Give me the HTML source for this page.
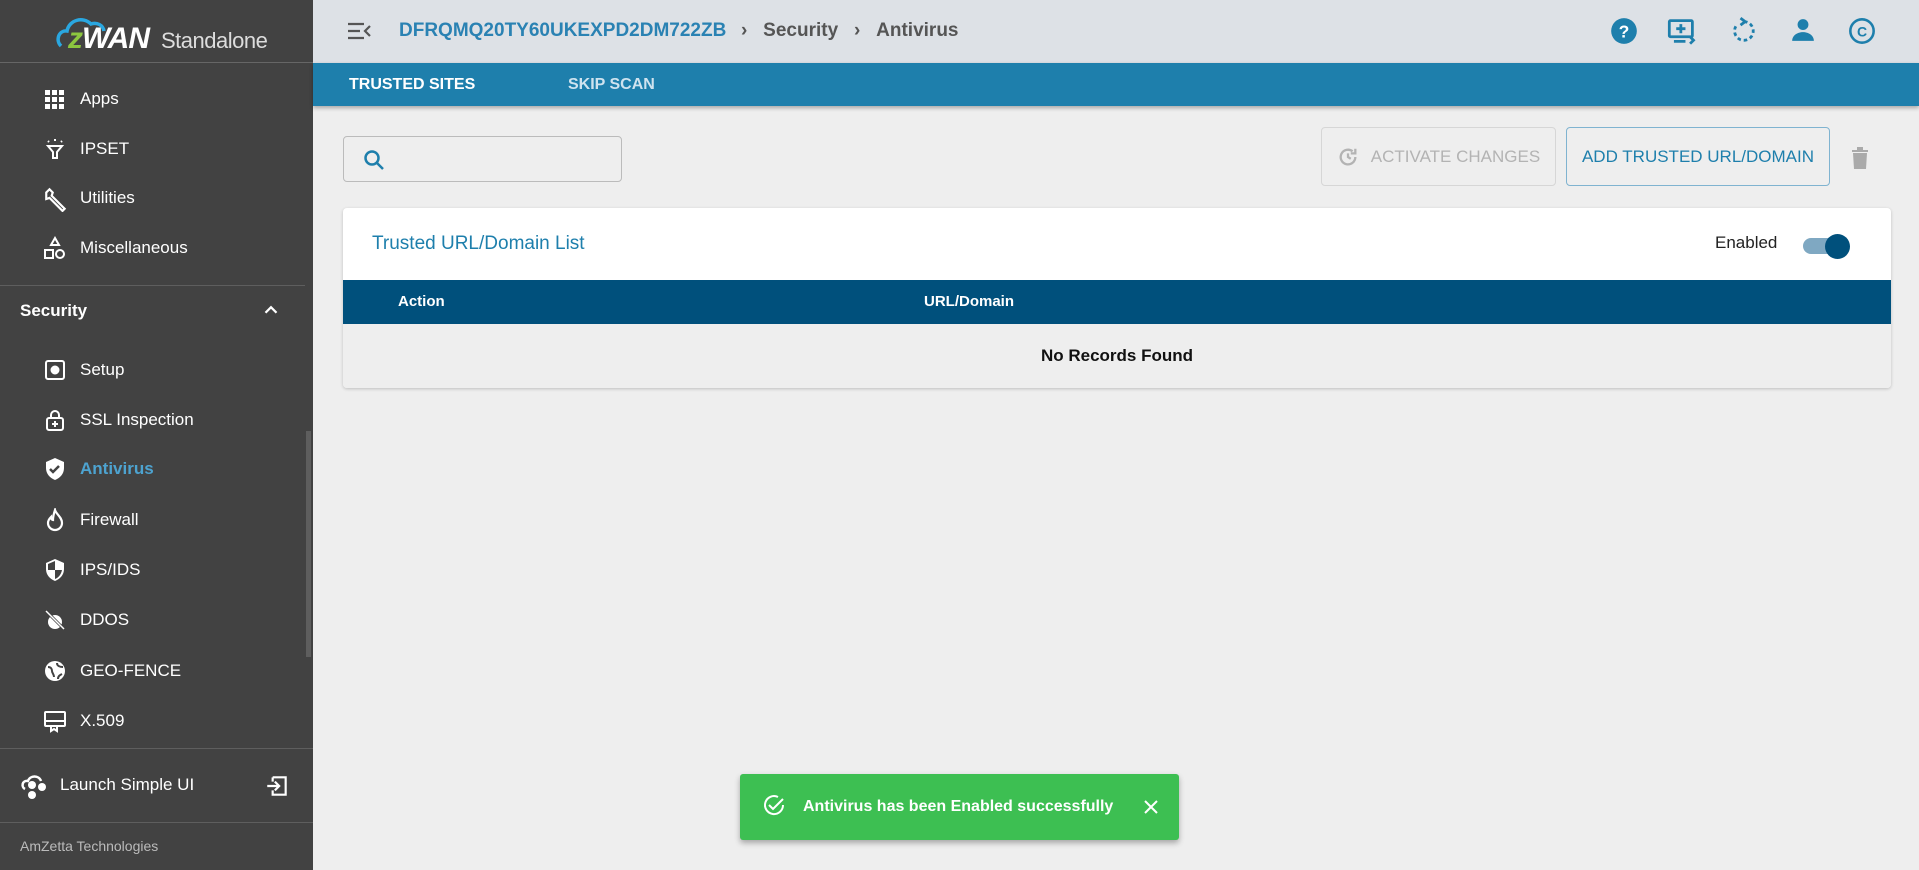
<!DOCTYPE html>
<html><head><meta charset="utf-8"><style>
*{box-sizing:border-box;margin:0;padding:0}
body{width:1919px;height:870px;overflow:hidden;font-family:"Liberation Sans",sans-serif;background:#eeeeee;position:relative}
.sb{position:absolute;left:0;top:0;width:313px;height:870px;background:#424242;color:#fff}
.logo{height:63px;border-bottom:1px solid #666;position:relative}
.nav{position:absolute;left:0;width:313px;height:40px;display:flex;align-items:center;font-size:17px;color:#fff}
.nav svg{position:absolute;left:43px;top:8px}
.nav span{position:absolute;left:80px}
.hr{position:absolute;left:0;width:305px;height:1px;background:#5e5e5e}
.top{position:absolute;left:313px;top:0;right:0;height:63px;background:#dde1e6}
.tabs{position:absolute;left:313px;top:63px;right:0;height:43px;background:#1e7fac;box-shadow:0 2px 4px rgba(0,0,0,.3);color:#fff;font-size:16px;font-weight:bold}
.btn{position:absolute;border-radius:4px;font-size:17px;display:flex;align-items:center;justify-content:center}
.card{position:absolute;left:343px;top:208px;width:1548px;height:180px;background:#fff;border-radius:4px;box-shadow:0 1px 3px rgba(0,0,0,.2);overflow:hidden}
</style></head><body>
<div class="sb">
 <div class="logo">
  <svg style="position:absolute;left:55px;top:12px" width="60" height="40" viewBox="0 0 60 40"><path d="M6 34 C0 28 4 18 12 19 C14 8 28 4 36 12 C42 10 48 13 49 19" fill="none" stroke="#2aa7e0" stroke-width="3.5"/></svg>
  <div style="position:absolute;left:68px;top:22px;font-size:30px;font-weight:bold;font-style:italic;letter-spacing:-1px"><span style="color:#8cc63f">z</span>WAN</div>
  <div style="position:absolute;left:161px;top:28px;font-size:22px;color:#ddd;letter-spacing:-0.5px">Standalone</div>
 </div>
 <div class="nav" style="top:79px"><svg width="24" height="24" viewBox="0 0 24 24" fill="#fff"><path d="M2 3h5v5H2zm7 0h5v5H9zm7 0h5v5h-5zM2 10h5v5H2zm7 0h5v5H9zm7 0h5v5h-5zM2 17h5v5H2zm7 0h5v5H9zm7 0h5v5h-5z"/></svg><span>Apps</span></div>
 <div class="nav" style="top:129px"><svg width="24" height="24" viewBox="0 0 24 24" fill="none" stroke="#fff" stroke-width="2"><path d="M5 9h14l-5 6v6h-4v-6z"/><path d="M12 2v2M5 4l1 1M19 4l-1 1"/></svg><span>IPSET</span></div>
 <div class="nav" style="top:178px"><svg width="26" height="26" viewBox="0 0 24 24" fill="none" stroke="#fff" stroke-width="2"><path d="M3 6l3-3 3 3-1 3 12 12-2 2L6 11 3 12z"/></svg><span>Utilities</span></div>
 <div class="nav" style="top:228px"><svg width="24" height="24" viewBox="0 0 24 24" fill="none" stroke="#fff" stroke-width="2"><path d="M12 2l4 7H8z"/><rect x="2" y="14" width="8" height="8"/><circle cx="17" cy="18" r="4"/></svg><span>Miscellaneous</span></div>
 <div class="hr" style="top:285px"></div>
 <div class="nav" style="top:291px;font-weight:bold"><span style="left:20px">Security</span><svg style="left:260px" width="22" height="22" viewBox="0 0 24 24" fill="none" stroke="#fff" stroke-width="2.5"><path d="M6 15l6-6 6 6"/></svg></div>
 <div class="nav" style="top:350px"><svg width="24" height="24" viewBox="0 0 24 24" fill="none" stroke="#fff" stroke-width="2"><rect x="3" y="3" width="18" height="18" rx="2"/><circle cx="12" cy="12" r="3.5" fill="#fff"/></svg><span>Setup</span></div>
 <div class="nav" style="top:400px"><svg width="24" height="24" viewBox="0 0 24 24" fill="none" stroke="#fff" stroke-width="2"><rect x="4" y="10" width="16" height="12" rx="2"/><path d="M8 10V7a4 4 0 018 0v3M12 13v6M9 16h6"/></svg><span>SSL Inspection</span></div>
 <div class="nav" style="top:449px"><svg width="24" height="24" viewBox="0 0 24 24"><path d="M12 1L3 5v6c0 6 4 10 9 12 5-2 9-6 9-12V5z" fill="#fff"/><path d="M7 12l3 3 6-6" stroke="#424242" stroke-width="2.5" fill="none"/></svg><span style="color:#4da3d0;font-weight:bold">Antivirus</span></div>
 <div class="nav" style="top:500px"><svg width="24" height="24" viewBox="0 0 24 24" fill="none" stroke="#fff" stroke-width="2.2"><path d="M12 2c1 4 7 7 7 13a7 7 0 01-14 0c0-3 2-5 3-6 0 2 1 3 2 3 0-4 1-7 2-10z"/></svg><span>Firewall</span></div>
 <div class="nav" style="top:550px"><svg width="24" height="24" viewBox="0 0 24 24"><path d="M12 1L3 5v6c0 6 4 10 9 12 5-2 9-6 9-12V5z" fill="#fff"/><path d="M12 3v9H5V6zM12 12h7c-1 5-4 8-7 9z" fill="#424242"/></svg><span>IPS/IDS</span></div>
 <div class="nav" style="top:600px"><svg width="24" height="24" viewBox="0 0 24 24" fill="#fff"><ellipse cx="12" cy="14" rx="7" ry="7"/><path d="M3 3l18 18" stroke="#424242" stroke-width="3"/><path d="M3 3l18 18" stroke="#fff" stroke-width="1.5"/></svg><span>DDOS</span></div>
 <div class="nav" style="top:651px"><svg width="24" height="24" viewBox="0 0 24 24"><circle cx="12" cy="12" r="10" fill="#fff"/><path d="M5 8c3 0 4 2 4 4s2 3 2 6M14 4c0 3 3 4 6 4M15 20c0-3 2-4 4-5" stroke="#424242" stroke-width="2" fill="none"/></svg><span>GEO-FENCE</span></div>
 <div class="nav" style="top:701px"><svg width="24" height="24" viewBox="0 0 24 24" fill="none" stroke="#fff" stroke-width="2"><rect x="2" y="3" width="20" height="14" rx="1"/><path d="M2 12h20M8 17v5l3-2 3 2v-5" /></svg><span>X.509</span></div>
 <div class="hr" style="top:748px;width:313px"></div>
 <div class="nav" style="top:765px"><svg style="left:20px" width="30" height="26" viewBox="0 0 30 26" fill="#fff"><path d="M5 16C1 14 2 7 8 8c2-6 11-6 13 0" fill="none" stroke="#fff" stroke-width="2.5"/><circle cx="12" cy="12" r="4"/><circle cx="22" cy="14" r="4"/><circle cx="12" cy="22" r="4"/></svg><span style="left:60px">Launch Simple UI</span><svg style="left:264px" width="26" height="26" viewBox="0 0 24 24" fill="none" stroke="#fff" stroke-width="2"><path d="M8 4H20V20H8V16M8 8V4M3 12h11M10 8l4 4-4 4"/></svg></div>
 <div class="hr" style="top:822px;width:313px"></div>
 <div style="position:absolute;left:20px;top:838px;font-size:14px;color:#bbb">AmZetta Technologies</div>
 <div style="position:absolute;left:306px;top:431px;width:5px;height:226px;background:#5e5e5e"></div>
</div>
<div class="top">
 <svg style="position:absolute;left:33px;top:20px" width="26" height="22" viewBox="0 0 26 22" fill="none" stroke="#555" stroke-width="2.2"><path d="M2 4h16M2 11h12M2 18h16M24 6l-5 5 5 5"/></svg>
 <div style="position:absolute;left:86px;top:20px;font-size:19px;font-weight:bold;color:#2a82b3">DFRQMQ20TY60UKEXPD2DM722ZB</div>
 <div style="position:absolute;left:428px;top:20px;font-size:19px;font-weight:bold;color:#555">›&nbsp;&nbsp;&nbsp;Security&nbsp;&nbsp;&nbsp;›&nbsp;&nbsp;&nbsp;Antivirus</div>
 <svg style="position:absolute;left:1297px;top:17px" width="28" height="28" viewBox="0 0 24 24"><circle cx="12" cy="12" r="11" fill="#1e7fac"/><text x="12" y="17.5" text-anchor="middle" font-size="15" font-weight="bold" fill="#fff" font-family="Liberation Sans">?</text></svg>
 <svg style="position:absolute;left:1354px;top:17px" width="30" height="28" viewBox="0 0 26 24" fill="none" stroke="#1e7fac" stroke-width="2.4"><rect x="2" y="3" width="20" height="14" rx="1"/><path d="M12 6v8M8 10h8M6 21h10M20 17l3 3-3 3"/></svg>
 <svg style="position:absolute;left:1417px;top:17px" width="28" height="28" viewBox="0 0 24 24" fill="none" stroke="#1e7fac" stroke-width="2.4"><path d="M12 4a8 8 0 11-7 4" stroke-dasharray="3 2.5"/><path d="M9 1l4 3-4 3" /></svg>
 <svg style="position:absolute;left:1477px;top:17px" width="26" height="26" viewBox="0 0 24 24" fill="#1e7fac"><circle cx="12" cy="7" r="5"/><path d="M2 22c0-5 5-8 10-8s10 3 10 8z"/></svg>
 <svg style="position:absolute;left:1535px;top:17px" width="28" height="28" viewBox="0 0 24 24"><circle cx="12" cy="12" r="10" fill="none" stroke="#1e7fac" stroke-width="2.2"/><text x="12" y="16.5" text-anchor="middle" font-size="12" font-weight="bold" fill="#1e7fac" font-family="Liberation Sans">C</text></svg>
</div>
<div class="tabs"><span style="position:absolute;left:36px;top:13px">TRUSTED SITES</span><span style="position:absolute;left:255px;top:13px;color:#cfe3ef">SKIP SCAN</span></div>
<div style="position:absolute;left:343px;top:136px;width:279px;height:46px;border:1px solid #bbb;border-radius:4px;background:#eee"><svg style="position:absolute;left:18px;top:11px" width="24" height="24" viewBox="0 0 24 24" fill="none" stroke="#1e7fac" stroke-width="2.5"><circle cx="10" cy="10" r="6.5"/><path d="M15 15l6 6"/></svg></div>
<div class="btn" style="left:1321px;top:127px;width:235px;height:59px;border:1px solid #d6d6d6;color:#b3b3b3"><svg width="22" height="22" viewBox="0 0 24 24" fill="none" stroke="#b3b3b3" stroke-width="2.5" style="margin-right:12px"><path d="M20 12a8 8 0 11-3-6.2M20 3v5h-5M12 8v4l3 2"/></svg>ACTIVATE CHANGES</div>
<div class="btn" style="left:1566px;top:127px;width:264px;height:59px;border:1px solid #7fb3d0;color:#1e7fac">ADD TRUSTED URL/DOMAIN</div>
<svg style="position:absolute;left:1848px;top:144px" width="24" height="26" viewBox="0 0 24 26" fill="#aaa"><path d="M4 6h16v2H4zM9 3h6v3H9zM5 9h14l-1 16H6z"/></svg>
<div class="card">
 <div style="position:absolute;left:29px;top:25px;font-size:19px;color:#1e7fac">Trusted URL/Domain List</div>
 <div style="position:absolute;left:1372px;top:25px;font-size:17px;color:#222">Enabled</div>
 <div style="position:absolute;left:1460px;top:30px;width:36px;height:16px;border-radius:8px;background:#7fa8c2"></div>
 <div style="position:absolute;left:1482px;top:26px;width:25px;height:25px;border-radius:50%;background:#00507c"></div>
 <div style="position:absolute;left:0;top:72px;width:100%;height:44px;background:#00507c;color:#fff;font-size:15px;font-weight:bold"><span style="position:absolute;left:55px;top:13px">Action</span><span style="position:absolute;left:581px;top:13px">URL/Domain</span></div>
 <div style="position:absolute;left:0;top:116px;width:100%;height:64px;background:#eeeeee;text-align:center;line-height:64px;font-size:17px;font-weight:bold;color:#111">No Records Found</div>
</div>
<div style="position:absolute;left:740px;top:774px;width:439px;height:66px;background:#3dbf52;border-radius:3px;box-shadow:0 3px 6px rgba(0,0,0,.3);color:#fff;font-size:16px;font-weight:bold">
 <svg style="position:absolute;left:22px;top:20px" width="24" height="24" viewBox="0 0 24 24" fill="none" stroke="#fff" stroke-width="2"><path d="M21 11a9 9 0 11-5-8"/><path d="M7 11l4 4 10-10"/></svg>
 <span style="position:absolute;left:63px;top:24px">Antivirus has been Enabled successfully</span>
 <svg style="position:absolute;left:403px;top:25px" width="16" height="16" viewBox="0 0 16 16" stroke="#fff" stroke-width="2"><path d="M2 2l12 12M14 2L2 14"/></svg>
</div>
</body></html>
